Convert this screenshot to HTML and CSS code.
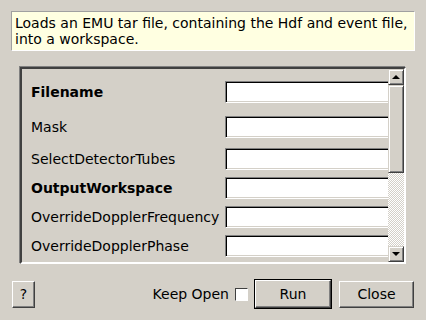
FILE: index.html
```html
<!DOCTYPE html>
<html lang="en">
<head>
  <meta charset="UTF-8">
  <title>LoadEMU input dialog</title>
  <link rel="stylesheet" href="styles.css">
</head>
<body>

  <div class="dialog">
    <div class="desc">Loads an EMU tar file, containing the Hdf and event file, into a workspace.</div>

    <div class="props">
      <div class="props-view">
        <div class="row row-file">
          <span class="label bold">Filename</span>
          <span class="field"></span>
        </div>
        <div class="row row-mask">
          <span class="label">Mask</span>
          <span class="field"></span>
        </div>
        <div class="row">
          <span class="label">SelectDetectorTubes</span>
          <span class="field"></span>
        </div>
        <div class="row">
          <span class="label bold">OutputWorkspace</span>
          <span class="field"></span>
        </div>
        <div class="row">
          <span class="label">OverrideDopplerFrequency</span>
          <span class="field"></span>
        </div>
        <div class="row">
          <span class="label">OverrideDopplerPhase</span>
          <span class="field"></span>
        </div>
      </div>

      <div class="vscroll">
        <div class="sb-btn"><span class="tri-up"></span></div>
        <div class="sb-thumb"></div>
        <div class="sb-trough"></div>
        <div class="sb-btn"><span class="tri-down"></span></div>
      </div>
    </div>

    <div class="buttons">
      <button class="btn btn-help">?</button>
      <span class="spacer"></span>
      <label class="keep-open">Keep Open <span class="check"></span></label>
      <button class="btn btn-run">Run</button>
      <button class="btn btn-close">Close</button>
    </div>
  </div>

</body>
</html>
```

FILE: styles.css
```css
body {
  margin: 0;
  padding: 0;
  background: #d4d0c8;
  font-family: "DejaVu Sans", sans-serif;
  font-size: 14px;
  color: #000;
}

.dialog {
  width: 426px;
  height: 320px;
  display: flex;
  flex-direction: column;
  overflow: hidden;
}

/* description box */
.desc {
  margin: 11px 11px 0 11px;
  padding: 3px 3px 0 3px;
  height: 35px;
  background: #ffffe1;
  border-top: 1px solid #a0a0a0;
  border-left: 1px solid #a0a0a0;
  border-right: 1px solid #fff;
  border-bottom: 1px solid #fff;
  line-height: 16px;
}

/* property list */
.props {
  margin: 16px 20px 0 20px;
  height: 193px;
  display: flex;
  border-top: 2px solid #404040;
  border-left: 2px solid #404040;
  border-right: 2px solid #fff;
  border-bottom: 2px solid #fff;
  box-shadow: -1px -1px 0 #808080;
}

.props-view {
  flex: 1;
  overflow: hidden;
  padding: 12px 0 0 9px;
  display: flex;
  flex-direction: column;
  gap: 7px;
}

.row {
  display: flex;
  align-items: center;
  height: 22px;
  flex-shrink: 0;
}

.row-file {
  margin-bottom: 6px;
}

.row-mask {
  margin-bottom: 3px;
}

.label {
  width: 194px;
  flex-shrink: 0;
  white-space: nowrap;
}

.bold {
  font-weight: bold;
}

.field {
  flex-shrink: 0;
  width: 190px;
  height: 18px;
  background: #fff;
  border-top: 1px solid #808080;
  border-left: 1px solid #808080;
  border-bottom: 1px solid #fff;
  border-right: 1px solid #fff;
  box-shadow: inset 1px 1px 0 #000, inset -1px -1px 0 #d4d0c8;
  padding: 1px;
}

/* scrollbar */
.vscroll {
  width: 16px;
  display: flex;
  flex-direction: column;
}

.sb-btn,
.sb-thumb {
  background: #d4d0c8;
  border-top: 1px solid #d4d0c8;
  border-left: 1px solid #d4d0c8;
  border-right: 1px solid #404040;
  border-bottom: 1px solid #404040;
  box-shadow: inset 1px 1px 0 #fff, inset -1px -1px 0 #808080;
  box-sizing: border-box;
}

.sb-btn {
  height: 16px;
  display: flex;
  align-items: center;
  justify-content: center;
}

.sb-thumb {
  height: 88px;
}

.sb-trough {
  flex: 1;
  background: repeating-conic-gradient(#fff 0 25%, #d4d0c8 0 50%) 0 0 / 2px 2px;
}

.tri-up,
.tri-down {
  width: 0;
  height: 0;
  border-left: 4px solid transparent;
  border-right: 4px solid transparent;
}

.tri-up {
  border-bottom: 4px solid #000;
}

.tri-down {
  border-top: 4px solid #000;
}

/* bottom buttons */
.buttons {
  display: flex;
  align-items: center;
  margin: 16px 12px 0 12px;
  height: 28px;
}

.spacer {
  flex: 1;
}

.btn {
  font-family: "DejaVu Sans", sans-serif;
  font-size: 14px;
  color: #000;
  background: #d4d0c8;
  height: 27px;
  padding: 0;
  border-top: 1px solid #fff;
  border-left: 1px solid #fff;
  border-right: 1px solid #404040;
  border-bottom: 1px solid #404040;
  box-shadow: inset -1px -1px 0 #808080;
  border-radius: 0;
}

.btn-help {
  width: 23px;
}

.btn-run {
  width: 76px;
  height: 28px;
  margin-left: 7px;
  outline: 1px solid #000;
}

.btn-close {
  width: 75px;
  margin-left: 8px;
}

.keep-open {
  display: flex;
  align-items: center;
  gap: 6px;
}

.check {
  width: 11px;
  height: 11px;
  background: #fff;
  border-top: 1px solid #404040;
  border-left: 1px solid #404040;
  border-right: 1px solid #fff;
  border-bottom: 1px solid #fff;
}
```
